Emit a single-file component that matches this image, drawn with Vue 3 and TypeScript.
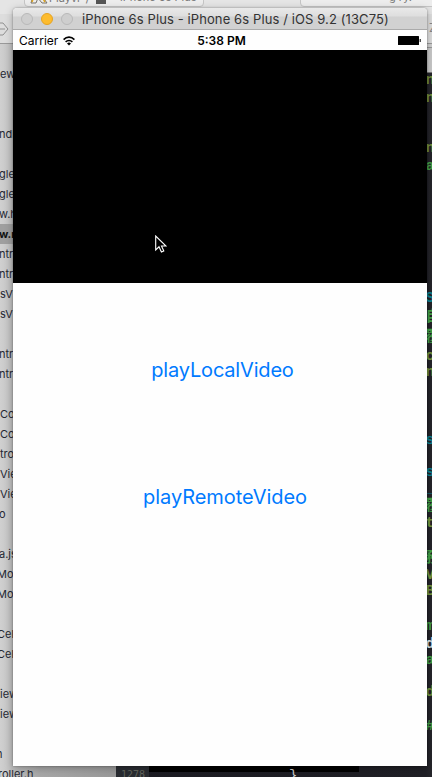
<script setup lang="ts">
interface Row { id: number; text: string; selected: boolean; indent: number }
interface CodeLine { top: number; text: string; tone: string }

const labels: Record<number, [string, number]> = {
  0: ['ew', 0], 3: ['ndl', -1], 5: ['gle', -1], 6: ['gle', -1], 7: ['w.h', -1], 8: ['w.m', -1],
  9: ['ntro', -1], 10: ['ntro', -1], 11: ['sVi', 0], 12: ['sVi', 0], 14: ['ntro', -1], 15: ['ntro', -1],
  17: ['Co', 0], 18: ['Co', 0], 19: ['tro', 0], 20: ['Vie', 0], 21: ['Vie', 0], 22: ['o', -1],
  24: ['a.js', -1], 25: ['Mod', -3], 26: ['Mod', -3], 28: ['Cell', -3], 29: ['Cell', -3],
  31: ['iew', 0], 32: ['iew', 0], 34: ['n', -4], 35: ['roller.h', -2],
}
const rows: Row[] = Array.from({ length: 36 }, (_, id) => ({
  id,
  text: labels[id]?.[0] ?? '',
  indent: labels[id]?.[1] ?? 0,
  selected: id === 8,
}))

const code: CodeLine[] = [
  { top: 72, text: 'n', tone: 'olive' }, { top: 90, text: 'n', tone: 'olive' },
  { top: 140, text: 'n', tone: 'olive' }, { top: 158, text: 'a', tone: 'green' },
  { top: 290, text: 'S', tone: 'teal' }, { top: 309, text: '自', tone: 'green' },
  { top: 329, text: '覆', tone: 'green' }, { top: 348, text: 'c', tone: 'olive' },
  { top: 364, text: 'n', tone: 'olive' }, { top: 432, text: 's', tone: 'teal' },
  { top: 464, text: 's', tone: 'teal' }, { top: 480, text: '_', tone: 'teal' },
  { top: 498, text: '覆', tone: 'green' }, { top: 515, text: 't', tone: 'olive' },
  { top: 550, text: '務', tone: 'green' }, { top: 567, text: 'V', tone: 'olive' },
  { top: 583, text: 'B', tone: 'olive' }, { top: 618, text: 'm', tone: 'green' },
  { top: 636, text: 'd', tone: 'pale' }, { top: 652, text: 'a', tone: 'green' },
  { top: 684, text: 'd', tone: 'olive' }, { top: 718, text: '#', tone: 'green' },
]
</script>

<template>
  <main class="desktop">
    <div class="toolbar">
      <div class="field scheme">
        <svg class="tool" width="18" height="9" viewBox="0 0 18 9"><path d="M3 0 1 7H6L8 2 12 7H17L12 0" fill="none" stroke="#77736b" /><path d="M4 0 2 6M12 1 15 6" stroke="#dda522" stroke-width="1.5" /></svg>
        <span class="scheme-name">Playvi</span><span class="slash">⟩</span><i class="device"></i><span class="device-name">iPhone 6s Plus</span>
      </div>
      <div class="field status-field"><span>g  ry.</span></div>
    </div>
    <div class="tabs"></div>
    <svg class="nav" width="10" height="16" viewBox="0 0 10 16"><path d="M0 2H3L8 8 3 14H0M0 8H5" fill="none" stroke="#909090" /></svg>
    <aside class="sidebar">
      <div v-for="row in rows" :key="row.id" class="row" :class="{ selected: row.selected }">
        <span :style="{ marginLeft: row.indent + 'px' }">{{ row.text }}</span>
      </div>
    </aside>
    <section class="editor">
      <div class="gutter">1278</div>
      <i class="tail"></i>
      <span class="brace">}</span>
    </section>
    <span v-for="line in code" :key="line.top" class="code" :class="line.tone" :style="{ top: line.top + 'px' }">{{ line.text }}</span>
    <span class="zed">Z</span>

    <section class="window">
      <header class="titlebar">
        <i class="light"></i><i class="light amber"></i><i class="light"></i>
        <h1>iPhone 6s Plus - iPhone 6s Plus / iOS 9.2 (13C75)</h1>
      </header>
      <div class="statusbar">
        <div class="carrier">
          <span>Carrier</span>
          <svg width="12" height="10" viewBox="0 0 12 10" fill="none" stroke="#000"><path d="M.6 3.6C3.7.3 8.3.3 11.4 3.6" stroke-width="1.6" /><path d="M2.6 5.9C4.6 3.9 7.4 3.9 9.4 5.9" stroke-width="1.5" /><path d="M4 7.4Q6 5.7 8 7.4L6 9.5Z" fill="#000" stroke="none" /></svg>
        </div>
        <time>5:38 PM</time>
        <svg class="battery" width="24" height="10" viewBox="0 0 24 10"><rect x="1" y="0" width="21" height="9" rx=".5" /><rect x="22.7" y="3" width="1" height="3" /></svg>
      </div>
      <div class="video">
        <svg class="cursor" width="12" height="19" viewBox="0 0 12 19"><path d="M.7 1V15L4 11.8 6.4 17.1 8.8 16 6.5 11H11Z" fill="#000" stroke="#fff" stroke-width="1.1" /></svg>
      </div>
      <div class="content">
        <button class="local">playLocalVideo</button>
        <button class="remote">playRemoteVideo</button>
      </div>
    </section>
  </main>
</template>

<style>
body { margin: 0; overflow: hidden; }
</style>

<style scoped>
* { box-sizing: border-box; }
.desktop { position: relative; width: 432px; height: 777px; overflow: hidden; background: linear-gradient(90deg, #cdcdcd, #bfbfbf 12px, #999 116px); font-family: Inter, "Liberation Sans", sans-serif; }
.toolbar { position: absolute; inset: 0 0 auto; height: 15px; background: #e5e5e5; }
.field { position: absolute; top: -15px; height: 22px; border: 1px solid #c5c5c5; border-radius: 4px; background: #ededed; font-size: 11px; line-height: 14px; color: #777; }
.scheme { left: 24px; width: 180px; }
.status-field { left: 300px; width: 145px; }
.status-field span { position: absolute; left: 88px; top: 4px; white-space: pre; }
.tool { position: absolute; left: 5px; top: 10px; }
.scheme-name { position: absolute; left: 24px; top: 5px; }
.slash { position: absolute; left: 60px; top: 5px; }
.device { position: absolute; left: 71px; top: 12px; width: 10px; height: 6px; background: #555; }
.device-name { position: absolute; left: 95px; top: 4px; white-space: nowrap; }
.tabs { position: absolute; top: 14px; left: 0; right: 0; height: 59px; background: linear-gradient(#ddd 0 29px, #999 29px 30px, #d0d0d0 30px 33px, #999 33px 34px, #c9c9c9 34px 58px, #777 58px); }
.nav { position: absolute; left: 0; top: 21px; }
.sidebar { position: absolute; left: 0; top: 44px; width: 116px; height: 733px; padding-top: 20px; overflow: hidden; background: linear-gradient(90deg, #d0d0d0, #c9c9c9 6px, #bdbdbd 12px, #a7a7a7 40px, #999); }
.row { height: 20px; line-height: 21px; font-size: 11px; color: #252833; white-space: nowrap; }
.row.selected { background: #9f9f9f; color: #111; font-weight: 700; }
.editor { position: absolute; left: 116px; top: 73px; right: 0; bottom: 0; background: linear-gradient(90deg, #1b1b22, #202026 310px, #26262b); }
.gutter { position: absolute; left: 0; bottom: 0; width: 33px; height: 11px; overflow: hidden; background: #292c31; color: #63655d; font: 10px/17px "DejaVu Sans Mono", monospace; text-indent: 5px; }
.tail { position: absolute; left: 33px; top: 693px; width: 160px; height: 6px; background: #000; box-shadow: 50px 0 #000; }
.brace { position: absolute; left: 173px; top: 695px; color: #ccc; font: 14px/16px "Liberation Mono", monospace; }
.code { position: absolute; left: 425.5px; width: 18px; font: bold 15px/18px "Liberation Mono", "Noto Sans CJK SC", monospace; white-space: pre; }
.green { color: #43a047; }
.olive { color: #74953f; }
.teal { color: #0a8394; }
.pale { color: #dce8ec; }
.zed { position: absolute; left: 429px; top: 20px; font-size: 12px; color: #888; }
.window { position: absolute; left: 13px; top: 8px; width: 414px; height: 758px; display: flex; flex-direction: column; border-radius: 4px 4px 0 0; background: #fefefe; box-shadow: 0 0 2px #0006, 0 2px 9px #0004; }
.titlebar { display: flex; align-items: center; gap: 8px; height: 22px; padding: 1px 8px 0; border-bottom: 1px solid #aaa; border-radius: 4px 4px 0 0; background: linear-gradient(#e9e9e9, #dedede 8px, #d1d1d1 9px, #d1d1d1); }
.light { flex: none; width: 12px; height: 12px; border: 1px solid #b9b9b9; border-radius: 50%; background: #cecece; }
.amber { border-color: #e5a323; background: #fdbc2e; }
h1 { margin: 0 0 0 1px; font-size: 13px; line-height: 18px; font-weight: 400; color: #333; white-space: nowrap; letter-spacing: 0.105px; }
.statusbar { display: grid; grid-template-columns: 1fr auto 1fr; align-items: center; height: 20px; padding: 1px 6px 0; font-size: 12px; line-height: 18px; color: #000; background: #fefefe; }
.carrier { display: flex; align-items: center; gap: 5px; }
time { font-weight: 600; position: relative; left: 1.5px; }
.battery { justify-self: end; }
.video { position: relative; height: 233px; background: #000; }
.cursor { position: absolute; left: 142px; top: 185px; }
.content { display: flex; flex-direction: column; align-items: center; padding-top: 74px; }
button { border: 0; padding: 0; background: none; color: #007aff; font: 20px/27px Inter, sans-serif; }
.local { margin-left: 5px; letter-spacing: -0.18px; }
.remote { margin-top: 100px; margin-left: 10px; letter-spacing: -0.05px; }
</style>
